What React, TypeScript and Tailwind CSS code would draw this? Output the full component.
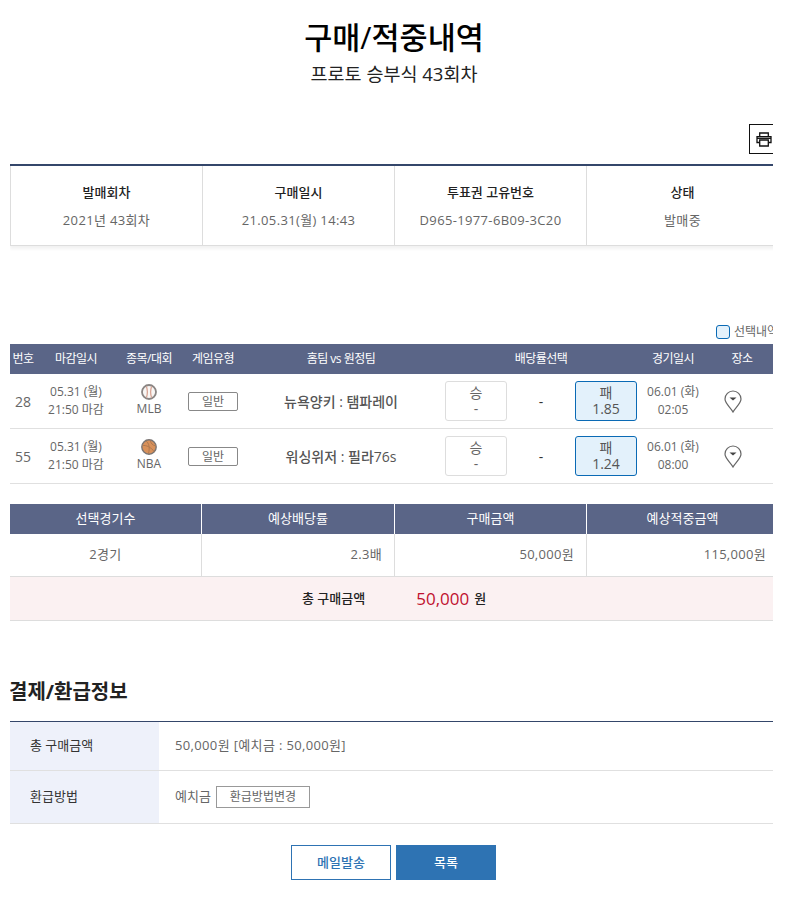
const font = { fontFamily: '"Open Sans", "Noto Sans CJK KR", sans-serif' };

function Ball({ kind }: { kind: "mlb" | "nba" }) {
  if (kind === "mlb") {
    return (
      <svg width="16" height="16" viewBox="0 0 16 16" className="block">
        <circle cx="8" cy="8" r="7" fill="#f8f6f4" stroke="#8a8583" strokeWidth="1.800" />
        <path d="M5.400 2.500C6.600 5.800 6.600 10.200 5.400 13.500M10.600 2.500C9.400 5.800 9.400 10.200 10.600 13.500" fill="none" stroke="#d9a596" strokeWidth="1.300" />
      </svg>
    );
  }
  return (
    <svg width="16" height="16" viewBox="0 0 16 16" className="block">
      <circle cx="8" cy="8" r="7.200" fill="#d9915a" stroke="#7a7573" strokeWidth="1.400" />
      <path d="M1.500 6.500C5 6 10 8 13.500 13M5 1.800C8 4 9 9 7.500 14.500M9.500 1.500C9.500 4 11.500 6.500 15 7" fill="none" stroke="#a87650" strokeWidth="0.900" />
    </svg>
  );
}

function Pin() {
  return (
    <svg width="18" height="23" viewBox="0 0 18 23" className="block">
      <path d="M9 22C7 18 1 13.500 1 9a8 8 0 0 1 16 0c0 4.500-6 9-8 13Z" fill="#fff" stroke="#666" strokeWidth="1.200" />
      <path d="M5.500 7.500h7L9 10.500Z" fill="#444" />
    </svg>
  );
}

function Printer() {
  return (
    <svg width="16" height="15" viewBox="0 0 16 15" fill="none" stroke="#111" strokeWidth="1.300" className="block">
      <path d="M3.700 4.500V1h8.600v3.500" />
      <path d="M3.500 10.500H1V4.700h14v5.800h-2.500" />
      <path d="M3.700 8h8.600v6H3.700Z" />
      <path d="M1 6.300h14" />
    </svg>
  );
}

const matchCols = "grid grid-cols-[26px_80px_66px_62px_194px_206px_58px_80px]";

function Odds({ label, value, active }: { label: string; value: string; active?: boolean }) {
  return (
    <div
      className={
        active
          ? "w-[62px] h-[40px] shrink-0 flex flex-col items-center justify-center rounded-[3px] border border-[#0a6ab5] bg-[#e3f1fb] text-[#555] text-[14px] leading-[16px]"
          : "w-[62px] h-[40px] shrink-0 flex flex-col items-center justify-center rounded-[3px] border border-[#ddd] bg-white text-[#666] text-[14px] leading-[16px]"
      }
    >
      <span>{label}</span>
      <span>{value}</span>
    </div>
  );
}

function Match({ no, sport, kind, teams, odds, time }: { no: string; sport: string; kind: "mlb" | "nba"; teams: string; odds: string; time: string }) {
  return (
    <div className={matchCols + " h-[55px] items-center border-b border-[#e0e0e0] text-[#666]"}>
      <div className="text-center text-[14px]">{no}</div>
      <div className="text-center text-[12px] leading-[18px]">
        <div>05.31 (월)</div>
        <div>21:50 마감</div>
      </div>
      <div className="flex flex-col items-center text-[12px] leading-[18px]">
        <Ball kind={kind} />
        <div>{sport}</div>
      </div>
      <div className="flex justify-center">
        <div className="w-[50px] h-[19px] rounded-[2px] border border-[#888] text-center text-[12px] leading-[17px]">일반</div>
      </div>
      <div className="text-center text-[14px] font-medium text-[#555]">{teams}</div>
      <div className="flex items-center justify-center">
        <div className="w-[192px] flex items-center justify-between text-[#333]">
          <Odds label="승" value="-" />
          <span className="text-[14px]">-</span>
          <Odds label="패" value={odds} active />
        </div>
      </div>
      <div className="text-center text-[12px] leading-[18px]">
        <div>06.01 (화)</div>
        <div>{time}</div>
      </div>
      <div className="flex justify-center pr-[18px]">
        <Pin />
      </div>
    </div>
  );
}

const four = "grid grid-cols-[192px_192px_192px_192px]";
const five = "grid grid-cols-[192px_193px_192px_192px]";

export default function App() {
  return (
    <div style={font} className="w-[798px] h-[904px] overflow-hidden bg-white pl-[10px]">
      <div className="w-[763px] overflow-hidden">
        <div className="w-[769px]">
          <div className="pt-[15px] text-center text-black ml-[-1px]">
            <h1 className="text-[30.500px] leading-[44px] font-medium">구매/적중내역</h1>
            <p className="mt-[2px] text-[18.500px] leading-[26px] text-[#222]">프로토 승부식 43회차</p>
          </div>

          <div className="mt-[37px] flex justify-start pl-[739px]">
            <div className="w-[30px] h-[30px] border border-[#111] flex items-center pl-[6px]">
              <Printer />
            </div>
          </div>

          <div className="mt-[10px] border-t-2 border-[#34466a]">
            <div className={four + " h-[80px] border-b border-l border-[#ddd] shadow-[0_3px_3px_#f2f2f2]"}>
              {[
                ["발매회차", "2021년 43회차"],
                ["구매일시", "21.05.31(월) 14:43"],
                ["투표권 고유번호", "D965-1977-6B09-3C20"],
                ["상태", "발매중"],
              ].map(([a, b]) => (
                <div key={a} className="border-r border-[#ddd] flex flex-col items-center pt-[16px]">
                  <div className="text-[13px] leading-[20px] font-medium text-[#222]">{a}</div>
                  <div className="mt-[8px] text-[13px] leading-[20px] tracking-[0.350px] text-[#666]">{b}</div>
                </div>
              ))}
            </div>
          </div>

          <div className="mt-[74px] h-[24px] flex items-center pl-[706px] gap-[4px] whitespace-nowrap">
            <span className="w-[14px] h-[14px] shrink-0 rounded-[3px] border border-[#0a6ab5] bg-[#e3f1fb]" />
            <span className="text-[12px] text-[#666]">선택내역</span>
          </div>

          <div className={matchCols + " h-[30px] items-center bg-[#5a6587] text-white text-[12px] tracking-[-0.500px] text-center"}>
            {["번호", "마감일시", "종목/대회", "게임유형", "홈팀 vs 원정팀", "배당률선택", "경기일시", "장소"].map((h) => (
              <div key={h}>{h}</div>
            ))}
          </div>
          <Match no="28" sport="MLB" kind="mlb" teams="뉴욕양키 : 탬파레이" odds="1.85" time="02:05" />
          <Match no="55" sport="NBA" kind="nba" teams="워싱위저 : 필라76s" odds="1.24" time="08:00" />

          <div className={five + " mt-[20px] h-[30px] items-stretch bg-[#5a6587] text-white text-[13px] text-center"}>
            {["선택경기수", "예상배당률", "구매금액", "예상적중금액"].map((h) => (
              <div key={h} className="flex items-center justify-center border-r border-white">{h}</div>
            ))}
          </div>
          <div className={five + " h-[43px] border-b border-[#ddd] text-[13px] tracking-[0.300px] text-[#666]"}>
            <div className="flex items-center justify-center border-r border-[#ddd]">2경기</div>
            <div className="flex items-center justify-end pr-[12px] border-r border-[#ddd]">2.3배</div>
            <div className="flex items-center justify-end pr-[12px] border-r border-[#ddd]">50,000원</div>
            <div className="flex items-center justify-end pr-[13px]">115,000원</div>
          </div>
          <div className="h-[44px] flex items-center bg-[#fbf1f2] border-b border-[#ddd] pl-[292px] text-[13px] font-medium text-[#222]">
            <span>총 구매금액</span>
            <span className="ml-[51px] text-[17px] font-normal text-[#c0102e]">50,000</span>
            <span className="ml-[5px]">원</span>
          </div>

          <h2 className="mt-[57px] ml-[-1px] text-[20px] leading-[28px] font-bold text-[#222]">결제/환급정보</h2>
          <div className="mt-[15px] border-t border-[#34466a]">
            <div className="flex h-[49px] border-b border-[#e0e0e0] text-[13px]">
              <div className="w-[149px] bg-[#eef1fa] pl-[20px] flex items-center text-[#333]">총 구매금액</div>
              <div className="pl-[16px] flex items-center text-[#666] tracking-[0.350px]">50,000원 [예치금 : 50,000원]</div>
            </div>
            <div className="flex h-[53px] border-b border-[#e0e0e0] text-[13px]">
              <div className="w-[149px] bg-[#eef1fa] pl-[20px] flex items-center text-[#333]">환급방법</div>
              <div className="pl-[16px] flex items-center text-[#666] gap-[5px]">
                <span>예치금</span>
                <span className="w-[94px] h-[22px] border border-[#999] text-center text-[12px] leading-[20px]">환급방법변경</span>
              </div>
            </div>
          </div>

          <div className="mt-[21px] flex pl-[281px] gap-[5px] text-[13px] font-medium">
            <div className="w-[100px] h-[35px] border border-[#2e73b3] text-[#2e73b3] flex items-center justify-center">메일발송</div>
            <div className="w-[100px] h-[35px] bg-[#2e73b3] text-white flex items-center justify-center">목록</div>
          </div>
        </div>
      </div>
    </div>
  );
}
